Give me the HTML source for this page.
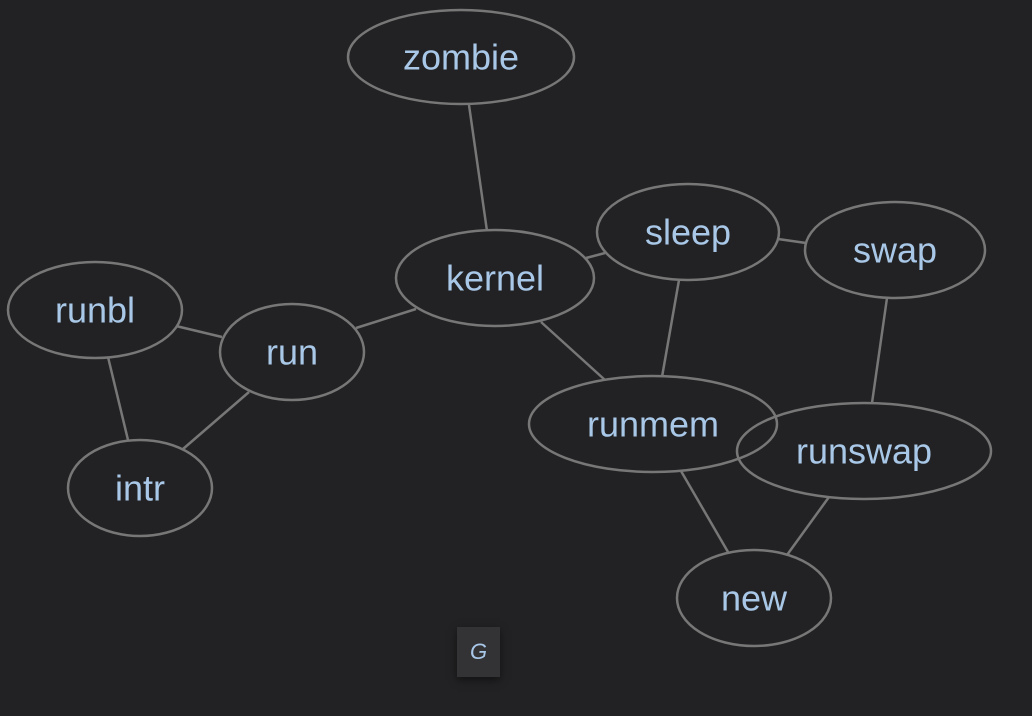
<!DOCTYPE html>
<html><head><style>
html,body{margin:0;padding:0;background:#222224;width:1032px;height:716px;overflow:hidden}
svg{position:absolute;left:0;top:0}
text{font-family:"Liberation Sans",sans-serif;font-size:36px;fill:#a9c8e8;text-anchor:middle;dominant-baseline:central}
.g{position:absolute;left:457px;top:627px;width:43px;height:50px;background:#333335;box-shadow:0 3px 8px rgba(0,0,0,.5);color:#a9c8e8;font:italic 22px "Liberation Sans",sans-serif;text-align:center;line-height:50px}
</style></head><body>
<svg width="1032" height="716">
<g stroke="#777" stroke-width="2.5" fill="none">
<line x1="469" y1="105" x2="487" y2="231"/>
<line x1="416" y1="309" x2="356" y2="328"/>
<line x1="176" y1="326" x2="222" y2="337"/>
<line x1="108" y1="357" x2="128" y2="440"/>
<line x1="249" y1="392" x2="183" y2="449"/>
<line x1="586" y1="258" x2="605" y2="253"/>
<line x1="541" y1="322" x2="605" y2="380"/>
<line x1="679" y1="280" x2="662" y2="377"/>
<line x1="778" y1="239" x2="806" y2="243"/>
<line x1="887" y1="298" x2="872" y2="403"/>
<line x1="681" y1="471" x2="728" y2="552"/>
<line x1="829" y1="497" x2="787" y2="555"/>
<ellipse cx="461" cy="57" rx="113" ry="47"/>
<ellipse cx="495" cy="278" rx="99" ry="48"/>
<ellipse cx="688" cy="232" rx="91" ry="48"/>
<ellipse cx="895" cy="250" rx="90" ry="48"/>
<ellipse cx="95" cy="310" rx="87" ry="48"/>
<ellipse cx="292" cy="352" rx="72" ry="48"/>
<ellipse cx="140" cy="488" rx="72" ry="48"/>
<ellipse cx="653" cy="424" rx="124" ry="48"/>
<ellipse cx="864" cy="451" rx="127" ry="48"/>
<ellipse cx="754" cy="598" rx="77" ry="48"/>
</g>
<text x="461" y="57">zombie</text>
<text x="495" y="278">kernel</text>
<text x="688" y="232">sleep</text>
<text x="895" y="250">swap</text>
<text x="95" y="310">runbl</text>
<text x="292" y="352">run</text>
<text x="140" y="488">intr</text>
<text x="653" y="424">runmem</text>
<text x="864" y="451">runswap</text>
<text x="754" y="598">new</text>
</svg>
<div class="g">G</div>
</body></html>
